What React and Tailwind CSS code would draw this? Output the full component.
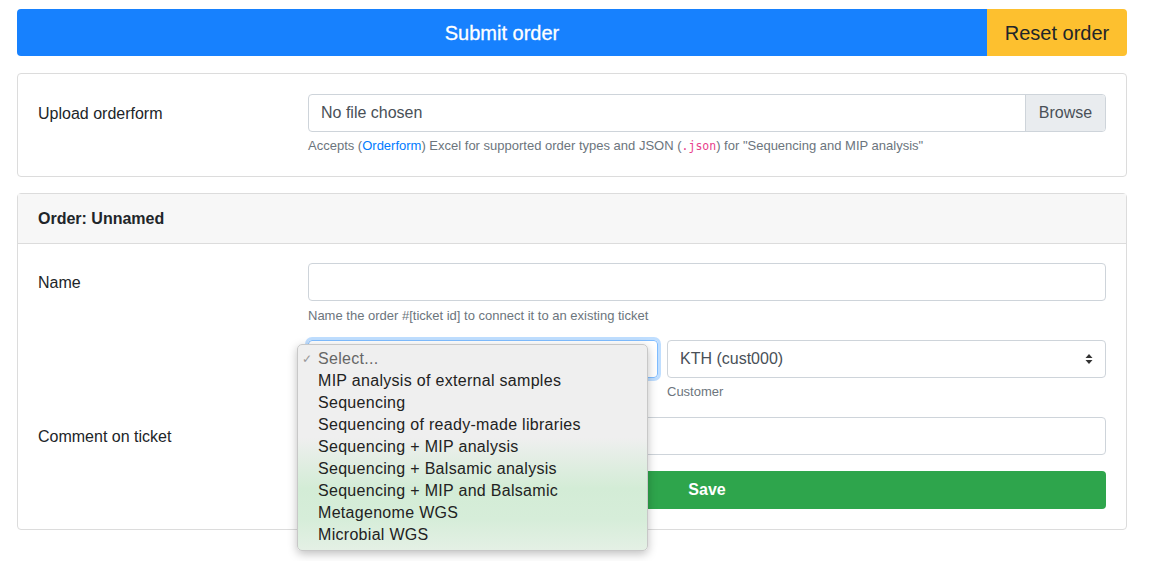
import React from 'react';

const OPTIONS = [
  'MIP analysis of external samples',
  'Sequencing',
  'Sequencing of ready-made libraries',
  'Sequencing + MIP analysis',
  'Sequencing + Balsamic analysis',
  'Sequencing + MIP and Balsamic',
  'Metagenome WGS',
  'Microbial WGS',
];

function Row({ label, children, labelClass = '' }) {
  return (
    <div className="flex">
      <div className={`w-[270px] shrink-0 pt-[8px] text-[16px] text-[#212529] ${labelClass}`}>{label}</div>
      <div className="flex-1">{children}</div>
    </div>
  );
}

export default function App() {
  return (
    <div className="w-[1151px] h-[561px] bg-white overflow-hidden pl-[17px] pt-[9px]" style={{ fontFamily: '"Liberation Sans", Arial, sans-serif' }}>
      <div className="w-[1110px]">
        <div className="flex h-[47px] rounded-[4px] overflow-hidden">
          <button className="flex-1 bg-[#1781fe] text-white text-[20px] [-webkit-text-stroke:0.3px_white]">Submit order</button>
          <button className="w-[140px] bg-[#fdc02f] text-[#212529] text-[20px]">Reset order</button>
        </div>

        <div className="mt-[17px] border border-[#dcdcdc] rounded-[4px] h-[104px] px-[20px] pt-[20px]">
          <Row label="Upload orderform">
            <div className="flex h-[38px] border border-[#ced4da] rounded-[4px] overflow-hidden">
              <div className="flex-1 px-[12px] flex items-center text-[16px] text-[#495057]">No file chosen</div>
              <div className="w-[80px] bg-[#e9ecef] border-l border-[#ced4da] flex items-center justify-center text-[16px] text-[#495057]">Browse</div>
            </div>
            <div className="mt-[4px] text-[13px] text-[#6c757d]">
              Accepts (<span className="text-[#007bff]">Orderform</span>) Excel for supported order types and JSON (<span className="text-[#e83e8c] text-[11.5px]" style={{ fontFamily: '"DejaVu Sans Mono", monospace' }}>.json</span>) for "Sequencing and MIP analysis"
            </div>
          </Row>
        </div>

        <div className="mt-[16px] border border-[#dcdcdc] rounded-[4px] h-[337px] relative">
          <div className="h-[50px] bg-[#f7f7f7] border-b border-[#dcdcdc] px-[20px] flex items-center font-bold text-[16px] text-[#212529]">
            Order: Unnamed
          </div>
          <div className="px-[20px] pt-[19px] flex flex-col">
            <Row label="Name">
              <div className="h-[38px] border border-[#ced4da] rounded-[4px]" />
              <div className="mt-[5px] text-[13px] text-[#6c757d]">Name the order #[ticket id] to connect it to an existing ticket</div>
            </Row>
            <div className="mt-[14px]">
              <Row label="">
                <div className="flex gap-[9px]">
                  <div className="w-[350px] h-[38px] border border-[#80bdff] rounded-[4px] shadow-[0_0_0_3px_rgba(0,123,255,0.25)]" />
                  <div className="flex-1">
                    <div className="h-[38px] border border-[#ced4da] rounded-[4px] flex items-center justify-between px-[12px] text-[16px] text-[#495057]">
                      <span>KTH (cust000)</span>
                      <svg width="8" height="12" viewBox="0 0 8 12"><path d="M4 1 L7.5 5 H0.5 Z M4 11 L7.5 7 H0.5 Z" fill="#333" /></svg>
                    </div>
                    <div className="mt-[4px] text-[13px] text-[#6c757d]">Customer</div>
                  </div>
                </div>
              </Row>
            </div>
            <div className="mt-[16px]">
              <Row label="Comment on ticket">
                <div className="h-[38px] border border-[#ced4da] rounded-[4px]" />
                <button className="mt-[16px] w-full h-[38px] rounded-[4px] bg-[#2ea54c] text-white font-bold text-[16px]">Save</button>
              </Row>
            </div>
          </div>

          <div className="absolute left-[279px] top-[150px] w-[351px] h-[207px] rounded-[5px] border border-[#c8c8c8] shadow-[0_3px_10px_rgba(0,0,0,0.25)] bg-[linear-gradient(180deg,#efefef_0%,#efefef_45%,#d3ecd6_70%,#d6edd9_85%,#e4f0e5_100%)] pt-[3px] text-[16px] tracking-[0.3px] text-[#222]">
            <div className="h-[22px] flex items-center pl-[20px] relative text-[#666]">
              <span className="absolute left-[4px] text-[12px] text-[#999]">✓</span>
              Select...
            </div>
            {OPTIONS.map(o => (
              <div key={o} className="h-[22px] flex items-center pl-[20px]">{o}</div>
            ))}
          </div>
        </div>
      </div>
    </div>
  );
}
